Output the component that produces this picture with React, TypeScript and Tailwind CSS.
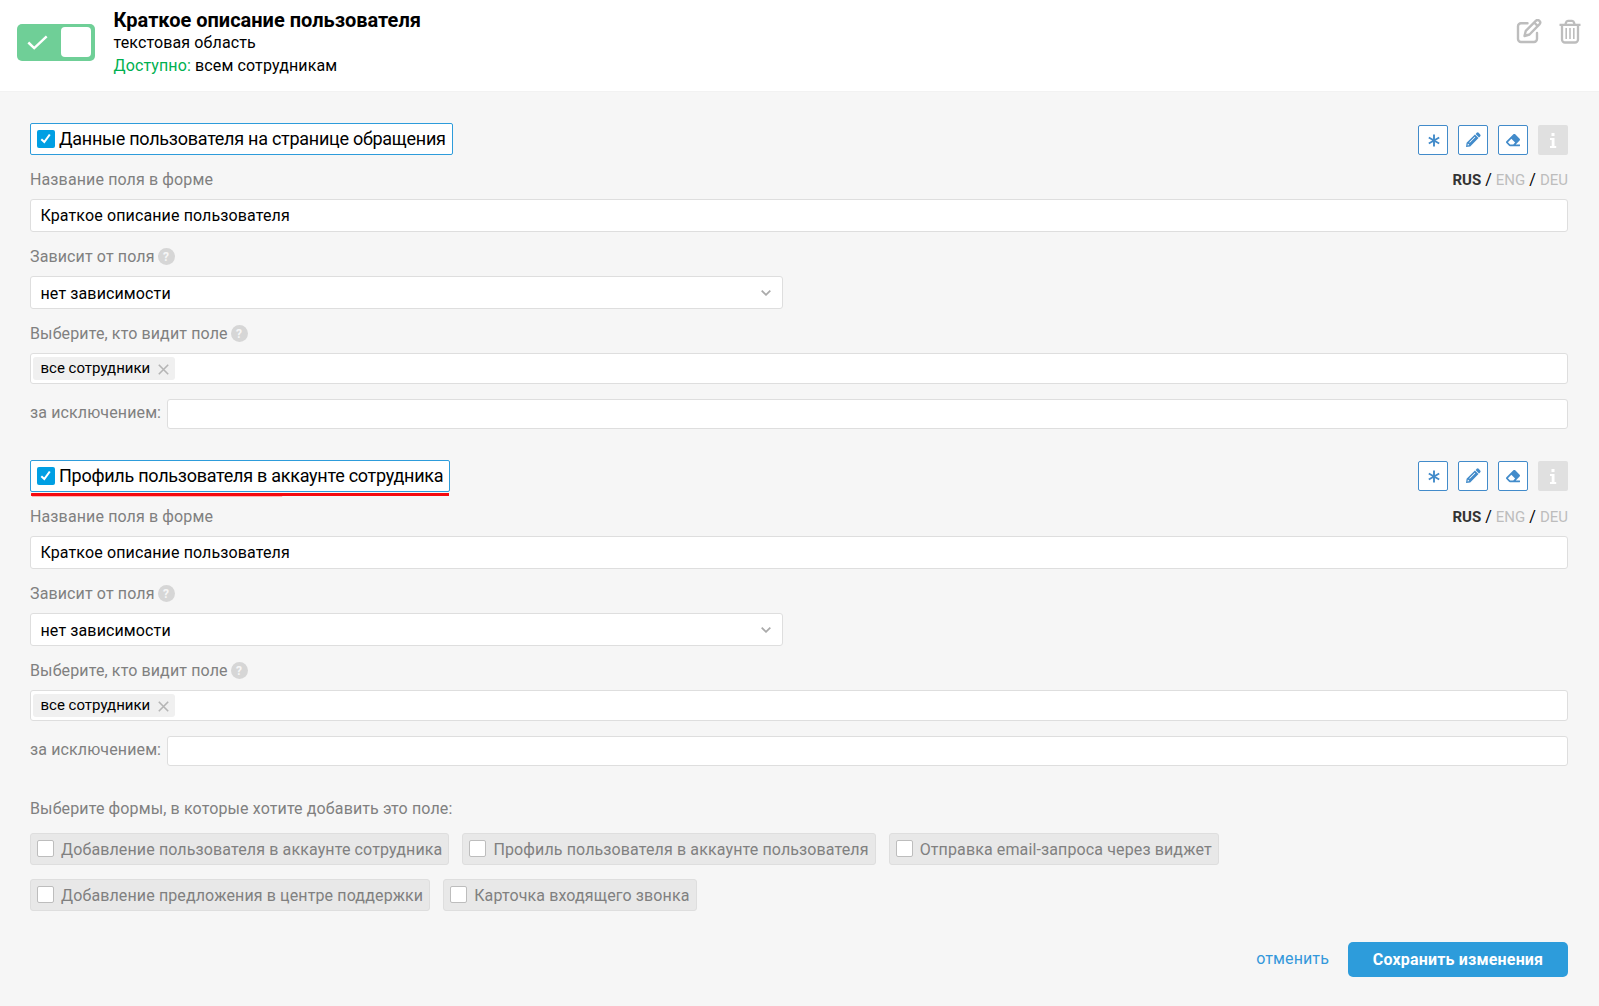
import { useState, type ReactNode } from "react";
import { FaEraser } from "react-icons/fa";

const LANGS = ["RUS", "ENG", "DEU"];

const FORM_ROWS = [
    [
        "Добавление пользователя в аккаунте сотрудника",
        "Профиль пользователя в аккаунте пользователя",
        "Отправка email-запроса через виджет",
    ],
    ["Добавление предложения в центре поддержки", "Карточка входящего звонка"],
];

function EditIcon() {
    return (
        <svg width="26" height="26" viewBox="0 0 26 26" fill="none" stroke="#bdbdbd" strokeWidth="2.4">
            <path d="M11.5 4.2H5a3 3 0 0 0-3 3V20a3 3 0 0 0 3 3h13a3 3 0 0 0 3-3v-6" strokeLinecap="round" />
            <path d="M8.5 17l1.3-5.2L19.8 1.800a2.500 2.500 0 0 1 3.600 3.600L13.500 15.500z" strokeLinejoin="round" />
            <path d="M18.2 3.500l3.600 3.600" />
        </svg>
    );
}

function TrashIcon() {
    return (
        <svg width="22" height="25" viewBox="0 0 22 25" fill="none" stroke="#bdbdbd" strokeWidth="2.3">
            <path d="M.5 5.800h21M3 6v14.500a3 3 0 0 0 3 3h10a3 3 0 0 0 3-3V6" />
            <path d="M6.500 5.500l.5-2a2.200 2.200 0 0 1 2-1.700h4a2.200 2.200 0 0 1 2 1.700l.5 2" />
            <path d="M7.200 9v11M11 9v11M14.800 9v11" strokeWidth="1.6" />
        </svg>
    );
}

function AsteriskIcon() {
    return (
        <svg className="ml-[2px]" width="12" height="13" viewBox="0 0 12 13" stroke="#428bca" strokeWidth="1.9">
            <path d="M6 .5v12M.8 3.500l10.400 6M11.200 3.500L.8 9.500" />
        </svg>
    );
}

function PencilIcon() {
    return (
        <svg width="16" height="16" viewBox="0 0 16 16" fill="#428bca">
            <path d="M10.600 2l1.200-1.200a1.300 1.300 0 0 1 1.800 0l1.600 1.600a1.300 1.300 0 0 1 0 1.800L14 5.400z" />
            <path fillRule="evenodd" d="M9.900 2.500L13.500 6.100l-8.300 8.300L1 15l.6-4.200zM2.900 11.600l-.4 1.900 1.900-.4zM9.700 4.700L4.200 10.200l.6.600 5.500-5.500z" />
        </svg>
    );
}

function InfoIcon() {
    return (
        <svg width="8" height="15" viewBox="0 0 8 15" fill="#fff">
            <path d="M2.500 0h3v3h-3zM1 5h4.500v8H7.200v2H1v-2h1.700V7H1z" />
        </svg>
    );
}

function ToolButton({ title, children }: { title: string; children: ReactNode }) {
    return (
        <button title={title} className="flex size-[30px] items-center justify-center rounded-xs border border-[#428bca] bg-white text-[#428bca]">
            {children}
        </button>
    );
}

function Hint() {
    return (
        <span className="mb-px ml-[3px] flex size-[17px] items-center justify-center rounded-full bg-[#d6d6d6] text-xs leading-none font-bold text-[#f6f6f6]">
            ?
        </span>
    );
}

function FieldLabel({ children }: { children: ReactNode }) {
    return <div className="flex h-5 items-center text-base text-[#808080]">{children}</div>;
}

function FieldBlock({ title, marked }: { title: string; marked?: boolean }) {
    const [lang, setLang] = useState("RUS");

    return (
        <section className="h-[337px]">
            <div className="flex h-8 items-start justify-between">
                <div className="relative flex h-8 items-center rounded-xs border border-[#2d9cdb] bg-white px-1.5">
                    <span className="mr-1 flex size-[18px] items-center justify-center rounded-xs bg-[#009fe3]">
                        <svg width="12" height="12" viewBox="0 0 12 12" fill="none" stroke="#fff" strokeWidth="2.1">
                            <path d="M1.300 6.300l3 2.700L9.800 1.500" />
                        </svg>
                    </span>
                    <span className="text-[18px] leading-[30px] tracking-[-0.265px] whitespace-nowrap text-black">{title}</span>
                    {marked && (
                        <svg className="absolute top-[32px] left-0 w-full" height="4" viewBox="0 0 418 4" preserveAspectRatio="none">
                            <path d="M1 2.500h250" stroke="#ffb3b3" strokeWidth="3" />
                            <path d="M1 1.500h417" stroke="#f50a0f" strokeWidth="3" strokeLinecap="round" />
                        </svg>
                    )}
                </div>
                <div className={marked ? "flex gap-2.5 pt-px" : "flex gap-2.5 pt-0.5"}>
                    <ToolButton title="Обязательное"><AsteriskIcon /></ToolButton>
                    <ToolButton title="Редактировать"><PencilIcon /></ToolButton>
                    <ToolButton title="Очистить"><FaEraser className="size-3.5" /></ToolButton>
                    <button className="flex size-[30px] items-center justify-center rounded-xs bg-[#e0e0e0]">
                        <InfoIcon />
                    </button>
                </div>
            </div>

            <div className="mt-[15px] flex justify-between">
                <FieldLabel>Название поля в форме</FieldLabel>
                <div className="flex h-5 items-center gap-1 text-[15px] tracking-normal">
                    {LANGS.map((code, i) => (
                        <span key={code} className="flex gap-1">
                            {i > 0 && <span className="text-base leading-5 text-black">/</span>}
                            <button
                                onClick={() => setLang(code)}
                                className={code === lang ? "leading-5 font-bold text-[#333]" : "leading-5 text-[#bdbdbd]"}
                            >
                                {code}
                            </button>
                        </span>
                    ))}
                </div>
            </div>
            <div className="mt-[9px] flex h-[33px] items-center rounded-[3px] border border-[#dedede] bg-white px-[9.5px] text-base text-black">
                Краткое описание пользователя
            </div>

            <div className="mt-[15px]">
                <FieldLabel>Зависит от поля<Hint /></FieldLabel>
            </div>
            <div className="mt-[9px] flex h-[33px] w-[753px] items-center justify-between rounded-[3px] border border-[#dedede] bg-white pr-[11px] pl-[9.5px] text-base text-black">
                <span className="pt-0.5">нет зависимости</span>
                <svg width="10" height="6" viewBox="0 0 10 6" fill="none" stroke="#aaa" strokeWidth="1.8">
                    <path d="M.7.7L5 4.800 9.300.7" />
                </svg>
            </div>

            <div className="mt-[15px]">
                <FieldLabel>Выберите, кто видит поле<Hint /></FieldLabel>
            </div>
            <div className="mt-[9px] flex h-[31px] items-center rounded-[3px] border border-[#dedede] bg-white px-0.5">
                <span className="flex h-[23px] items-center rounded-[3px] bg-[#f0f0f0] pr-[5.5px] pl-[7.5px] text-[15px] tracking-normal text-black">
                    <span className="leading-[23px]">все сотрудники</span>
                    <svg className="mt-px ml-2" width="11" height="11" viewBox="0 0 11 11" stroke="#b5b5b5" strokeWidth="1.6">
                        <path d="M.8.8l9.400 9.400M10.200.8L.8 10.200" />
                    </svg>
                </span>
            </div>

            <div className="mt-[15px] flex items-start text-base text-[#808080]">
                <span className="w-[137px] leading-[27px]">за исключением:</span>
                <div className="h-[30px] flex-1 rounded-[3px] border border-[#dedede] bg-white" />
            </div>
        </section>
    );
}

export default function App() {
    const [enabled, setEnabled] = useState(true);

    return (
        <div className="h-[1006px] w-[1599px] overflow-hidden bg-[#f6f6f6] font-['Roboto',sans-serif] tracking-[0.125px]">
            <header className="flex h-[91px] justify-between bg-white pr-[18px] pl-[17px]">
                <div className="flex">
                    <button
                        onClick={() => setEnabled(!enabled)}
                        className="mt-6 flex h-[37px] w-[78px] items-start justify-between rounded-[5px] bg-[#6fcf97] pt-[3px] pr-1 pl-[10px]"
                    >
                        <svg className="mt-2 h-[15px] w-[21px]" viewBox="0 0 22 16" fill="none" stroke="#fff">
                            <path d="M1.200 8l6.300 6L20.800 1.500" strokeWidth="2.6" />
                        </svg>
                        <span className="size-[30px] rounded-[4px] bg-white" />
                    </button>
                    <div className="ml-[18.5px] pt-2 text-base text-black">
                        <h1 className="text-[20px] leading-6 font-bold tracking-normal">Краткое описание пользователя</h1>
                        <p className="leading-[22px]">текстовая область</p>
                        <p className="leading-[23px]">
                            <span className="text-[#00b050]">Доступно:</span> всем сотрудникам
                        </p>
                    </div>
                </div>
                <div className="flex items-start gap-[17px] pt-[19px]">
                    <button title="Редактировать"><EditIcon /></button>
                    <button title="Удалить"><TrashIcon /></button>
                </div>
            </header>

            <main className="border-t border-[#f2f2f2] pt-[31px] pr-[31px] pl-[30px]">
                <FieldBlock title="Данные пользователя на странице обращения" />
                <FieldBlock title="Профиль пользователя в аккаунте сотрудника" marked />

                <div className="pt-0.5">
                    <FieldLabel>Выберите формы, в которые хотите добавить это поле:</FieldLabel>
                </div>
                <div className="mt-3.5 flex flex-col gap-3.5">
                    {FORM_ROWS.map((row, i) => (
                        <div key={i} className="flex gap-[13px]">
                            {row.map((name) => (
                                <label key={name} className="flex h-8 items-start rounded-[3px] border border-[#dedede] bg-[#e8e8e8] px-1.5 text-base text-[#808080]">
                                    <span className="mt-1.5 mr-[7px] size-[17px] rounded-xs border border-[#bdbdbd] bg-white" />
                                    <span className="leading-[31px] whitespace-nowrap">{name}</span>
                                </label>
                            ))}
                        </div>
                    ))}
                </div>

                <div className="mt-[31px] flex items-start justify-end">
                    <button className="mr-[19px] text-base leading-[33px] text-[#3498db]">отменить</button>
                    <button className="h-[35px] w-[220px] rounded-[5px] bg-[#2d9cdb] text-base font-bold tracking-[0.18px] text-white">
                        Сохранить изменения
                    </button>
                </div>
            </main>
        </div>
    );
}
